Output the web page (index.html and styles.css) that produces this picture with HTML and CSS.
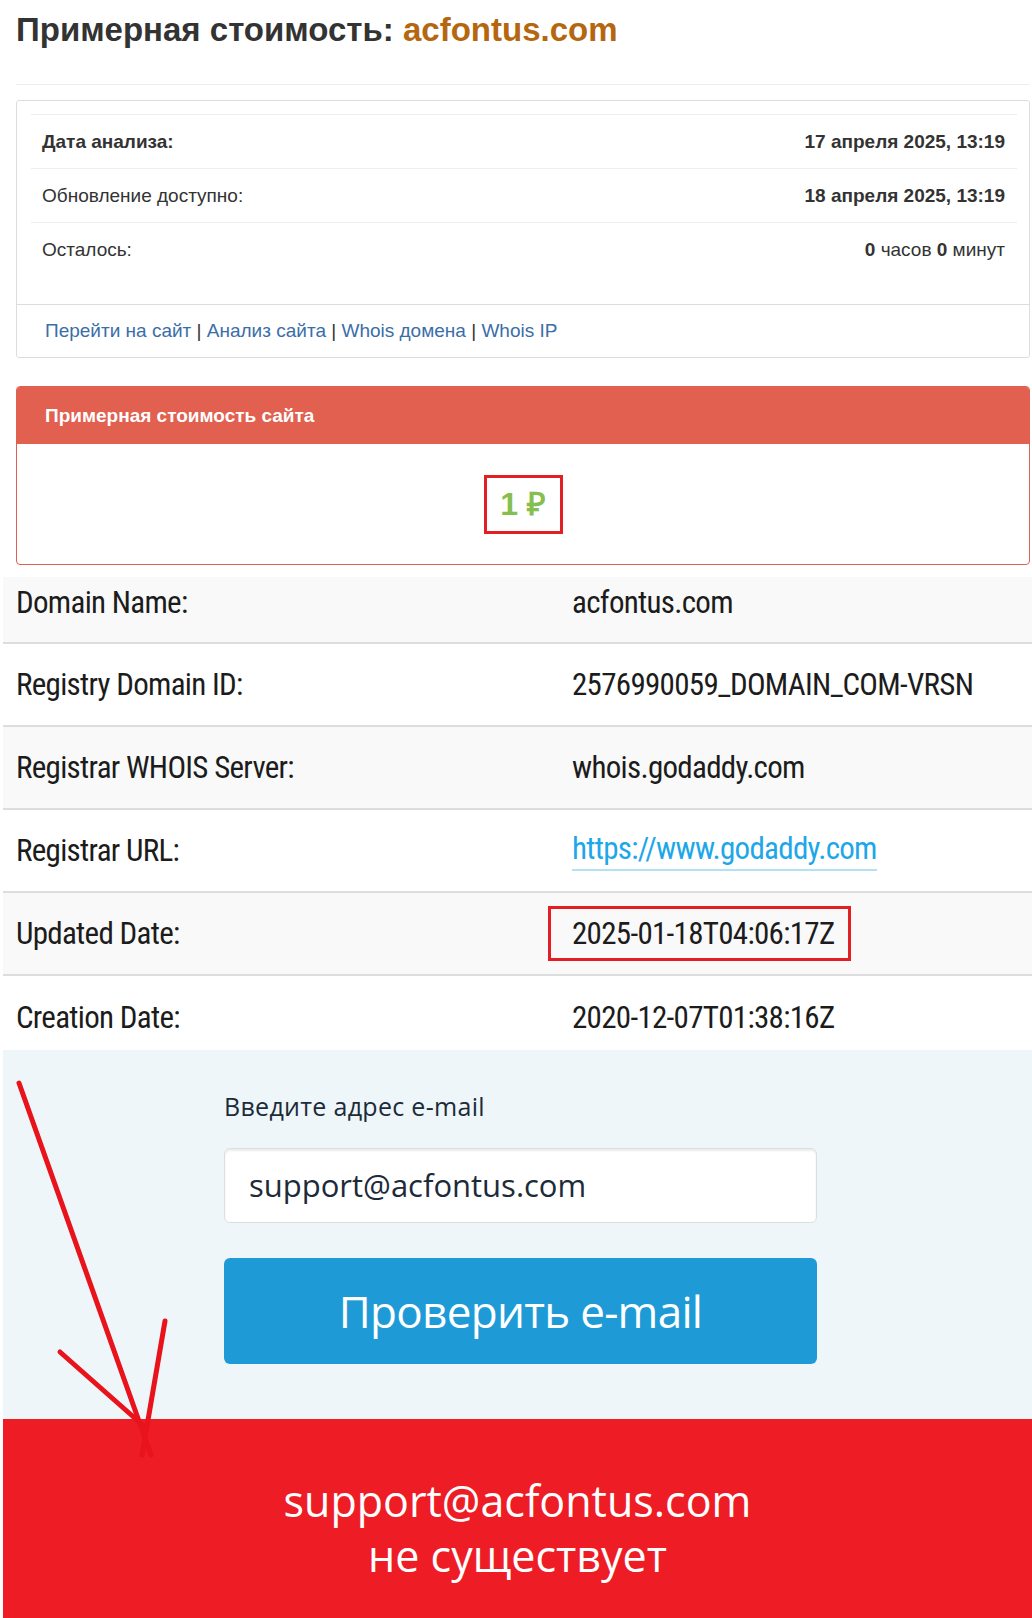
FILE: index.html
```html
<!DOCTYPE html>
<html lang="ru">
<head>
    <meta charset="UTF-8">
    <meta name="viewport" content="width=device-width, initial-scale=1.0">
    <title>Примерная стоимость: acfontus.com</title>
    <link rel="stylesheet" href="styles.css">
</head>
<body>
    <div class="page">
        <h1 class="title">Примерная стоимость: <span class="domain">acfontus.com</span></h1>
        <hr class="divider">

        <div class="info-box">
            <div class="info-body">
                <div class="info-row">
                    <b>Дата анализа:</b>
                    <b>17 апреля 2025, 13:19</b>
                </div>
                <div class="info-row">
                    <span>Обновление доступно:</span>
                    <b>18 апреля 2025, 13:19</b>
                </div>
                <div class="info-row">
                    <span>Осталось:</span>
                    <span><b>0</b> часов <b>0</b> минут</span>
                </div>
            </div>
            <div class="info-footer">
                <a href="#">Перейти на сайт</a> | <a href="#">Анализ сайта</a> | <a href="#">Whois домена</a> | <a href="#">Whois IP</a>
            </div>
        </div>

        <div class="price-panel">
            <div class="price-head">Примерная стоимость сайта</div>
            <div class="price-body">
                <span class="price">1 ₽</span>
            </div>
        </div>
    </div>

    <div class="whois">
        <div class="whois-row odd first">
            <div class="whois-label">Domain Name:</div>
            <div class="whois-value">acfontus.com</div>
        </div>
        <div class="whois-row">
            <div class="whois-label">Registry Domain ID:</div>
            <div class="whois-value">2576990059_DOMAIN_COM-VRSN</div>
        </div>
        <div class="whois-row odd">
            <div class="whois-label">Registrar WHOIS Server:</div>
            <div class="whois-value">whois.godaddy.com</div>
        </div>
        <div class="whois-row">
            <div class="whois-label">Registrar URL:</div>
            <div class="whois-value"><a class="whois-link" href="#">https://www.godaddy.com</a></div>
        </div>
        <div class="whois-row odd">
            <div class="whois-label">Updated Date:</div>
            <div class="whois-value"><span class="marked">2025-01-18T04:06:17Z</span></div>
        </div>
        <div class="whois-row last">
            <div class="whois-label">Creation Date:</div>
            <div class="whois-value">2020-12-07T01:38:16Z</div>
        </div>
    </div>

    <div class="email-check">
        <div class="email-form">
            <div class="email-label">Введите адрес e-mail</div>
            <div class="email-input">support@acfontus.com</div>
            <button class="email-button">Проверить e-mail</button>
        </div>
    </div>

    <div class="email-result">
        support@acfontus.com<br>
        не существует
    </div>

    <svg class="annotation" width="1032" height="1618" viewBox="0 0 1032 1618">
        <g stroke="#e8131b" stroke-width="5" stroke-linecap="round" fill="none">
            <path d="M19 1083 L151 1455"/>
            <path d="M60 1352 L146 1428"/>
            <path d="M165 1321 L142 1455"/>
        </g>
    </svg>
</body>
</html>
```

FILE: styles.css
```css
body {
    margin: 0;
    position: relative;
    background-color: #fff;
    color: #333;
    font-family: "Liberation Sans", Arial, sans-serif;
}

.page {
    padding: 0 2px 0 16px;
}

.title {
    margin: 12px 0 0;
    height: 36px;
    line-height: 36px;
    font-size: 33px;
    font-weight: bold;
    color: #333;
}
.domain {
    color: #b5670f;
}
.divider {
    margin: 36px 0 0;
    border: none;
    border-top: 1px solid #eee;
}

/* info box */
.info-box {
    margin-top: 15px;
    border: 1px solid #ddd;
    border-radius: 3px;
}
.info-body {
    padding: 13px 12px 28px 14px;
}
.info-row {
    display: flex;
    justify-content: space-between;
    align-items: center;
    height: 53px;
    padding: 0 12px 0 11px;
    border-top: 1px solid #eee;
    font-size: 19px;
}
.info-footer {
    height: 52px;
    line-height: 52px;
    padding-left: 28px;
    border-top: 1px solid #ddd;
    font-size: 19px;
}
.info-footer a {
    color: #3a6ea8;
    text-decoration: none;
}

/* price */
.price-panel {
    margin-top: 28px;
    border: 1px solid #e0604f;
    border-radius: 4px;
    overflow: hidden;
}
.price-head {
    height: 57px;
    line-height: 57px;
    padding-left: 28px;
    background-color: #e2604f;
    color: #fff;
    font-size: 19px;
    font-weight: bold;
}
.price-body {
    height: 120px;
    display: flex;
    justify-content: center;
    align-items: center;
}
.price {
    display: inline-block;
    width: 73px;
    height: 53px;
    line-height: 53px;
    text-align: center;
    border: 3px solid #e31e24;
    color: #86bf4f;
    font-size: 32px;
    font-weight: bold;
}

/* whois */
.whois {
    margin: 12px 0 0 3px;
    font-family: "Roboto Condensed", Roboto, sans-serif;
    font-stretch: 80%;
    font-size: 31px;
    letter-spacing: -0.7px;
    color: #1c1c1c;
}
.whois-row {
    display: flex;
    align-items: center;
    height: 81px;
    padding-left: 13px;
    border-bottom: 2px solid #ddd;
}
.whois-row.odd {
    background-color: #f9f9f9;
}
.whois-row.first {
    height: 50px;
    padding-bottom: 15px;
}
.whois-row.last {
    height: 66px;
    padding-top: 8px;
    border-bottom: none;
}
.whois-label {
    width: 556px;
}
.whois-link {
    display: inline-block;
    padding-bottom: 3px;
    border-bottom: 2px solid #b6e1f5;
    color: #1ea7e8;
    text-decoration: none;
    line-height: 1.15;
}
.marked {
    display: inline-block;
    box-sizing: border-box;
    width: 303px;
    margin-left: -24px;
    height: 55px;
    line-height: 49px;
    padding-left: 21px;
    border: 3px solid #e31e24;
}

/* e-mail check */
.email-check {
    margin-left: 3px;
    padding: 41px 0 55px 221px;
    background-color: #eef6fa;
    font-family: "Open Sans", "Noto Sans", sans-serif;
}
.email-form {
    width: 593px;
}
.email-label {
    height: 30px;
    line-height: 30px;
    font-size: 25px;
    letter-spacing: 0.3px;
    color: #1c2b39;
}
.email-input {
    box-sizing: border-box;
    margin-top: 27px;
    height: 75px;
    line-height: 73px;
    padding-left: 24px;
    background-color: #fff;
    border: 1px solid #dcdfe2;
    border-radius: 6px;
    box-shadow: inset 0 2px 2px rgba(0, 0, 0, 0.08);
    font-size: 31px;
    color: #1c2b39;
}
.email-button {
    display: block;
    width: 100%;
    height: 106px;
    margin-top: 35px;
    border: none;
    border-radius: 6px;
    background-color: #1e9bd7;
    color: #fff;
    font-family: "Open Sans", "Noto Sans", sans-serif;
    font-size: 44px;
    letter-spacing: -0.7px;
}

.email-result {
    height: 145px;
    margin-left: 3px;
    padding-top: 54px;
    background-color: #ee1c25;
    color: #fff;
    text-align: center;
    font-family: "Open Sans", "Noto Sans", sans-serif;
    font-size: 43px;
    line-height: 55px;
}

.annotation {
    position: absolute;
    top: 0;
    left: 0;
    pointer-events: none;
}
```
